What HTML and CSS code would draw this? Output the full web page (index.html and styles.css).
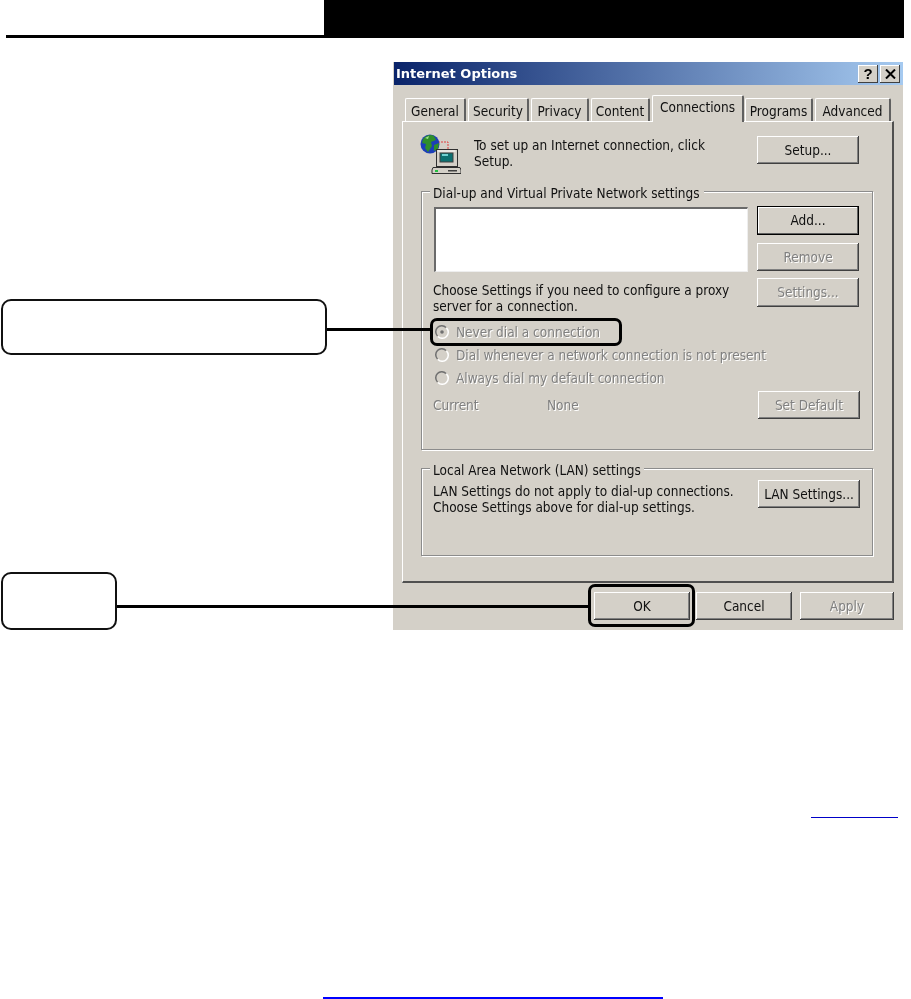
FILE: index.html
```html
<!DOCTYPE html>
<html lang="en">
<head>
<meta charset="utf-8">
<title>Internet Options</title>
<link rel="stylesheet" href="styles.css">
</head>
<body>
<header class="page-head">
  <div class="head-rule"></div>
  <div class="head-band"></div>
</header>

<main class="figure">
  <div class="dialog">
    <div class="titlebar">
      <span class="title">Internet Options</span>
      <span class="win-btn">?</span>
      <span class="win-btn win-x">
        <svg width="11" height="10" viewBox="0 0 11 10"><path d="M1 0.500 L10 9.500 M10 0.500 L1 9.500" stroke="#000" stroke-width="2" fill="none"/></svg>
      </span>
    </div>
    <div class="tabs">
      <span class="tab tab-general">General</span>
      <span class="tab tab-security">Security</span>
      <span class="tab tab-privacy">Privacy</span>
      <span class="tab tab-content">Content</span>
      <span class="tab tab-active">Connections</span>
      <span class="tab tab-programs">Programs</span>
      <span class="tab tab-advanced">Advanced</span>
    </div>
    <div class="panel">
      <div class="setup-row">
        <svg class="net-icon" width="42" height="42" viewBox="0 0 42 42">
          <path d="M19 8 H29 V15" fill="none" stroke="#e04040" stroke-width="1" stroke-dasharray="2 1"/>
          <circle cx="11" cy="10" r="9.500" fill="#1c3fb8"/>
          <path d="M4 5 C7 1 12 0 15 2 L17 6 L12 8 L13 12 L9 18 L6 14 L7 10 L3 9 Z" fill="#2f8f2a"/>
          <path d="M15 11 L20 9 L19 15 L15 17 Z" fill="#2f8f2a"/>
          <path d="M6 4 L10 2 L9 5 Z" fill="#9fe08a"/>
          <rect x="17.500" y="15.500" width="21" height="17" fill="#d4d0c8" stroke="#303030"/>
          <rect x="18.500" y="16.500" width="18" height="1" fill="#fff"/>
          <rect x="21" y="19" width="13" height="9" fill="#0d7070" stroke="#404040"/>
          <rect x="23" y="20" width="6" height="2" fill="#6fd0d0"/>
          <path d="M14 33.500 H41 L42 36 V39.500 H13 V36 Z" fill="#d4d0c8" stroke="#303030"/>
          <rect x="16" y="36" width="3" height="2" fill="#22c040"/>
          <rect x="29" y="36" width="9" height="1.500" fill="#404040"/>
        </svg>
        <p class="setup-text">To set up an Internet connection, click<br>Setup.</p>
        <span class="btn btn-setup">Setup...</span>
      </div>

      <section class="group group-dial">
        <div class="legend legend-dial">Dial-up and Virtual Private Network settings</div>
        <div class="dial-top">
          <div class="dial-left">
            <div class="listbox"></div>
            <p class="proxy-text">Choose Settings if you need to configure a proxy<br>server for a connection.</p>
            <div class="radios">
              <div class="radio-row off">
                <svg class="radio" width="14" height="14" viewBox="0 0 14 14"><path d="M2.500 11 A6 6 0 0 1 11 2.500" fill="none" stroke="#707070" stroke-width="1.500"/><path d="M11.500 3 A6 6 0 0 1 3 11.500" fill="none" stroke="#fff" stroke-width="1.500"/><circle cx="7" cy="7" r="1.800" fill="#707070"/></svg>
                <span>Never dial a connection</span>
              </div>
              <div class="radio-row off">
                <svg class="radio" width="14" height="14" viewBox="0 0 14 14"><path d="M2.500 11 A6 6 0 0 1 11 2.500" fill="none" stroke="#707070" stroke-width="1.500"/><path d="M11.500 3 A6 6 0 0 1 3 11.500" fill="none" stroke="#fff" stroke-width="1.500"/></svg>
                <span>Dial whenever a network connection is not present</span>
              </div>
              <div class="radio-row off">
                <svg class="radio" width="14" height="14" viewBox="0 0 14 14"><path d="M2.500 11 A6 6 0 0 1 11 2.500" fill="none" stroke="#707070" stroke-width="1.500"/><path d="M11.500 3 A6 6 0 0 1 3 11.500" fill="none" stroke="#fff" stroke-width="1.500"/></svg>
                <span>Always dial my default connection</span>
              </div>
            </div>
          </div>
          <div class="dial-right">
            <span class="btn btn-default">Add...</span>
            <span class="btn off btn-remove">Remove</span>
            <span class="btn off btn-settings">Settings...</span>
          </div>
        </div>
        <div class="current-row">
          <span class="off current-label">Current</span>
          <span class="off current-value">None</span>
          <span class="btn off btn-setdefault">Set Default</span>
        </div>
      </section>

      <section class="group group-lan">
        <div class="legend legend-lan">Local Area Network (LAN) settings</div>
        <div class="lan-row">
          <p class="lan-text">LAN Settings do not apply to dial-up connections.<br>Choose Settings above for dial-up settings.</p>
          <span class="btn btn-lan">LAN Settings...</span>
        </div>
      </section>
    </div>
    <div class="footer-btns">
      <span class="btn btn-foot">OK</span>
      <span class="btn btn-foot">Cancel</span>
      <span class="btn btn-foot off">Apply</span>
    </div>
  </div>

  <div class="callout callout-never"></div>
  <div class="leader leader-never"></div>
  <div class="highlight highlight-never"></div>
  <div class="callout callout-ok"></div>
  <div class="leader leader-ok"></div>
  <div class="highlight highlight-ok"></div>
</main>

<div class="link-line link-line-short"></div>
<div class="link-line link-line-long"></div>
</body>
</html>
```
FILE: styles.css
```css
html, body {
  margin: 0;
  padding: 0;
  background: #fff;
}

body {
  width: 911px;
  height: 999px;
  overflow: hidden;
  font-family: "DejaVu Sans", sans-serif;
}

p { margin: 0; }

.page-head {
  display: flex;
  align-items: flex-end;
  height: 38px;
  padding-left: 6px;
}

.head-rule {
  width: 318px;
  height: 3px;
  background: #000;
}

.head-band {
  width: 580px;
  height: 38px;
  background: #000;
}

.figure {
  position: relative;
  height: 779px;
  padding: 24px 0 0 393px;
  box-sizing: border-box;
}

/* dialog */
.dialog {
  width: 510px;
  height: 568px;
  background: #d4d0c8;
  font-family: "DejaVu Sans Condensed", "DejaVu Sans", sans-serif;
  font-stretch: condensed;
  font-size: 13.5px;
  line-height: 16px;
  color: #111;
  filter: blur(0.3px);
}

.titlebar {
  display: flex;
  align-items: center;
  gap: 2px;
  height: 23px;
  margin-left: 1px;
  padding-right: 3px;
  background: linear-gradient(90deg, #0a246a 0%, #a6caf0 100%);
  box-sizing: border-box;
}

.title {
  flex: 1;
  padding-left: 2px;
  color: #fff;
  font-family: "DejaVu Sans", sans-serif;
  font-stretch: normal;
  font-weight: 700;
  font-size: 13px;
}

.win-btn {
  display: flex;
  align-items: center;
  justify-content: center;
  width: 20px;
  height: 18px;
  background: #d4d0c8;
  box-shadow: inset -1px -1px 0 #404040, inset 1px 1px 0 #fff;
  color: #000;
  font-family: "Liberation Sans", sans-serif;
  font-stretch: normal;
  font-weight: 700;
  font-size: 15px;
}

.tabs {
  display: flex;
  align-items: flex-end;
  gap: 2px;
  height: 36px;
  margin-left: 12px;
}

.tab {
  display: flex;
  align-items: center;
  justify-content: center;
  height: 23px;
  padding-top: 1px;
  box-sizing: border-box;
  border-top: 1px solid #fff;
  border-left: 1px solid #fff;
  border-right: 2px solid #606060;
  border-radius: 2px 2px 0 0;
  white-space: nowrap;
}

.tab-general { width: 61px; }
.tab-security { width: 61px; }
.tab-privacy { width: 58px; }
.tab-content { width: 59px; }
.tab-programs { width: 68px; margin-left: -1px; }
.tab-advanced { width: 76px; }

.tab-active {
  position: relative;
  z-index: 1;
  width: 92px;
  height: 27px;
  padding: 0 0 4px;
  margin-bottom: -1px;
  background: #d4d0c8;
}

.panel {
  width: 492px;
  height: 462px;
  margin-left: 9px;
  padding: 14px 20px 0 18px;
  box-sizing: border-box;
  border-top: 1px solid #fff;
  border-left: 1px solid #fff;
  border-right: 2px solid #505050;
  border-bottom: 2px solid #505050;
}

.setup-row {
  display: flex;
  height: 28px;
  padding-right: 13px;
  align-items: flex-start;
}

.net-icon {
  flex: none;
  margin: -2px 13px 0 -2px;
}

.setup-text {
  flex: 1;
  margin-top: 1px;
  white-space: nowrap;
}

.btn {
  display: flex;
  align-items: center;
  justify-content: center;
  flex: none;
  box-sizing: border-box;
  width: 102px;
  height: 28px;
  padding-bottom: 1px;
  background: #d4d0c8;
  box-shadow: inset -1px -1px 0 #404040, inset 1px 1px 0 #fff, inset -2px -2px 0 #808080;
  white-space: nowrap;
}

.off {
  color: #808080;
  text-shadow: 1px 1px 0 #fff;
}

.btn-setup { margin-left: auto; }

.btn-default {
  height: 29px;
  border: 1px solid #000;
  box-shadow: inset -1px -1px 0 #606060, inset 1px 1px 0 #fff;
}

.btn-remove { margin-top: 8px; }
.btn-settings { height: 29px; margin-top: 7px; }

.group {
  box-sizing: border-box;
  width: 452px;
  border: 1px solid #8c8c8c;
  box-shadow: inset 1px 1px 0 #fff, 1px 1px 0 #fff;
}

.legend {
  width: max-content;
  height: 16px;
  margin: -7px 0 0 8px;
  padding: 0 3px;
  background: #d4d0c8;
  white-space: nowrap;
}

.group-dial {
  height: 259px;
  margin-top: 27px;
}

.legend-dial { padding-right: 4px; }

.dial-top {
  display: flex;
  padding: 5px 0 0 11px;
}

.dial-left {
  width: 324px;
  flex: none;
}

.listbox {
  box-sizing: border-box;
  width: 314px;
  height: 65px;
  margin: 1px 0 0 1px;
  background: #fff;
  border-top: 2px solid #6a6a6a;
  border-left: 2px solid #6a6a6a;
  border-right: 1px solid #eee;
  border-bottom: 1px solid #eee;
}

.proxy-text {
  margin-top: 10px;
  white-space: nowrap;
}

.radios {
  margin: 6px 0 0 2px;
}

.radio-row {
  display: flex;
  align-items: center;
  gap: 7px;
  height: 23px;
  white-space: nowrap;
}

.radio { flex: none; }

.current-row {
  display: flex;
  align-items: center;
  height: 28px;
  margin-top: 2px;
  padding-left: 11px;
}

.current-label { width: 114px; }
.current-value { width: 211px; }

.group-lan {
  height: 88px;
  margin-top: 18px;
}

.lan-row {
  display: flex;
  align-items: flex-start;
  padding: 2px 12px 0 11px;
}

.lan-text {
  flex: 1;
  margin-top: 3px;
  white-space: nowrap;
}

.btn-lan { margin-left: auto; }

.footer-btns {
  display: flex;
  margin: 9px 0 0 201px;
}

.btn-foot { width: 96px; margin-right: 6px; }
.btn-foot:nth-child(2) { margin-right: 8px; }
.btn-foot:nth-child(3) { width: 94px; margin-right: 0; }

/* callouts over the figure */
.callout {
  position: absolute;
  box-sizing: border-box;
  left: 1px;
  border: 2px solid #111;
  border-radius: 10px;
  background: #fff;
}

.callout-never { top: 261px; width: 326px; height: 56px; }
.callout-ok { top: 534px; width: 116px; height: 58px; }

.leader {
  position: absolute;
  height: 3px;
  background: #000;
}

.leader-never { left: 327px; top: 290px; width: 104px; }
.leader-ok { left: 117px; top: 567px; width: 472px; }

.highlight {
  position: absolute;
  box-sizing: border-box;
  border: 3px solid #000;
  border-radius: 7px;
}

.highlight-never { left: 430px; top: 280px; width: 192px; height: 28px; }
.highlight-ok { left: 588px; top: 546px; width: 107px; height: 43px; }

.link-line {
  position: absolute;
}

.link-line-short {
  left: 811px;
  top: 817px;
  width: 87px;
  height: 1px;
  background: #0000c8;
}

.link-line-long {
  left: 323px;
  top: 997px;
  width: 340px;
  height: 2px;
  background: #0000ff;
}
```
